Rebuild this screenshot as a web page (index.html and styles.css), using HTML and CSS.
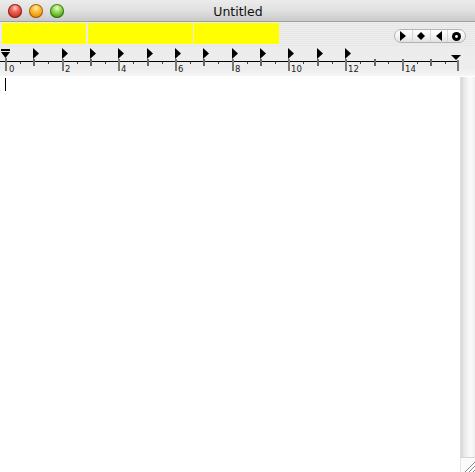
FILE: index.html
```html
<!DOCTYPE html>
<html>
<head>
<meta charset="utf-8">
<title>Untitled</title>
<link rel="stylesheet" href="styles.css">
</head>
<body>
<div class="window">
  <div class="titlebar">
    <div class="lights">
      <span class="light red"></span>
      <span class="light orange"></span>
      <span class="light green"></span>
    </div>
    <div class="title">Untitled</div>
  </div>
  <div class="toolbar">
    <div class="blocks">
      <div class="block b1"></div>
      <div class="block b2"></div>
      <div class="block b3"></div>
    </div>
    <div class="seg">
      <div class="seg-item"><svg width="6" height="10" viewBox="0 0 6 10"><polygon points="0,0 6,5 0,10" fill="#000"/></svg></div>
      <div class="seg-item"><svg width="8" height="8" viewBox="0 0 8 8"><polygon points="4,0 8,4 4,8 0,4" fill="#000"/></svg></div>
      <div class="seg-item"><svg width="6" height="10" viewBox="0 0 6 10"><polygon points="6,0 0,5 6,10" fill="#000"/></svg></div>
      <div class="seg-item"><svg width="9" height="9" viewBox="0 0 9 9"><circle cx="4.5" cy="4.5" r="4.5" fill="#000"/><circle cx="4.5" cy="4.5" r="1.4" fill="#fff"/></svg></div>
    </div>
  </div>
  <div class="ruler">
    <svg class="ruler-svg" width="475" height="30" viewBox="0 46 475 30">
      <rect x="0" y="61" width="458" height="1" fill="#000"/>
      <g fill="#444">
        <rect x="20" y="62" width="1" height="2"/>
        <rect x="48" y="62" width="1" height="2"/>
        <rect x="77" y="62" width="1" height="2"/>
        <rect x="105" y="62" width="1" height="2"/>
        <rect x="133" y="62" width="1" height="2"/>
        <rect x="162" y="62" width="1" height="2"/>
        <rect x="190" y="62" width="1" height="2"/>
        <rect x="218" y="62" width="1" height="2"/>
        <rect x="247" y="62" width="1" height="2"/>
        <rect x="275" y="62" width="1" height="2"/>
        <rect x="303" y="62" width="1" height="2"/>
        <rect x="332" y="62" width="1" height="2"/>
        <rect x="360" y="62" width="1" height="2"/>
        <rect x="388" y="62" width="1" height="2"/>
        <rect x="417" y="62" width="1" height="2"/>
        <rect x="445" y="62" width="1" height="2"/>
      </g>
      <g fill="#666">
        <rect x="33" y="59" width="2" height="7"/>
        <rect x="90" y="59" width="2" height="7"/>
        <rect x="147" y="59" width="2" height="7"/>
        <rect x="203" y="59" width="2" height="7"/>
        <rect x="260" y="59" width="2" height="7"/>
        <rect x="317" y="59" width="2" height="7"/>
        <rect x="374" y="59" width="2" height="7"/>
        <rect x="430" y="59" width="2" height="7"/>
      </g>
      <g fill="#777">
        <rect x="5" y="58" width="2" height="13"/>
        <rect x="62" y="59" width="2" height="12"/>
        <rect x="118" y="59" width="2" height="12"/>
        <rect x="175" y="59" width="2" height="12"/>
        <rect x="232" y="59" width="2" height="12"/>
        <rect x="288" y="59" width="2" height="12"/>
        <rect x="345" y="59" width="2" height="12"/>
        <rect x="402" y="59" width="2" height="12"/>
        <rect x="457" y="60" width="2" height="11"/>
      </g>
      <g class="ruler-num">
        <text x="9" y="72">0</text>
        <text x="65" y="72">2</text>
        <text x="121" y="72">4</text>
        <text x="178" y="72">6</text>
        <text x="235" y="72">8</text>
        <text x="291" y="72">10</text>
        <text x="348" y="72">12</text>
        <text x="405" y="72">14</text>
      </g>
      <g fill="#000">
        <polygon points="33,48 39,53.5 33,59"/>
        <polygon points="62,48 68,53.5 62,59"/>
        <polygon points="90,48 96,53.5 90,59"/>
        <polygon points="118,48 124,53.5 118,59"/>
        <polygon points="147,48 153,53.5 147,59"/>
        <polygon points="175,48 181,53.5 175,59"/>
        <polygon points="203,48 209,53.5 203,59"/>
        <polygon points="232,48 238,53.5 232,59"/>
        <polygon points="260,48 266,53.5 260,59"/>
        <polygon points="288,48 294,53.5 288,59"/>
        <polygon points="317,48 323,53.5 317,59"/>
        <polygon points="345,48 351,53.5 345,59"/>
      </g>
      <rect x="1" y="49" width="9" height="2" fill="#000"/>
      <polygon points="1,52 10,52 5.5,58" fill="#000"/>
      <polygon points="451,55 461,55 456,60" fill="#000"/>
    </svg>
  </div>
  <div class="content">
    <div class="text-area">
      <span class="caret"></span>
    </div>
    <div class="scroll">
      <div class="track"></div>
      <div class="grow">
        <svg width="15" height="15" viewBox="0 0 15 15">
          <g stroke="#8a8a8a" stroke-width="1">
            <line x1="4" y1="14" x2="14" y2="4"/>
            <line x1="8" y1="14" x2="14" y2="8"/>
            <line x1="12" y1="14" x2="14" y2="12"/>
          </g>
          <g stroke="#fff" stroke-width="1">
            <line x1="5" y1="14" x2="14" y2="5"/>
            <line x1="9" y1="14" x2="14" y2="9"/>
          </g>
        </svg>
      </div>
    </div>
  </div>
</div>
</body>
</html>
```

FILE: styles.css
```css
* { box-sizing: border-box; }

html, body {
  margin: 0;
  padding: 0;
  background: #fff;
}

.window {
  width: 475px;
  height: 472px;
  display: flex;
  flex-direction: column;
  font-family: "DejaVu Sans", "Liberation Sans", sans-serif;
  overflow: hidden;
}

.titlebar {
  height: 22px;
  flex: none;
  display: flex;
  align-items: center;
  background: linear-gradient(to bottom, #ececec 0%, #e0e0e0 50%, #cacaca 100%);
  border-bottom: 1px solid #a0a0a0;
}

.lights {
  display: flex;
  gap: 7px;
  padding-left: 8px;
  padding-top: 1px;
}

.light {
  width: 14px;
  height: 14px;
  border-radius: 50%;
  display: block;
}

.light.red {
  background: radial-gradient(circle at 50% 30%, #ffd0c8 0%, #f06a5c 30%, #d43a2e 65%, #8c1a12 100%);
  box-shadow: inset 0 0 0 1px rgba(100, 10, 5, 0.6);
}

.light.orange {
  background: radial-gradient(circle at 50% 30%, #fff0c0 0%, #ffc040 30%, #f09a10 65%, #a05a00 100%);
  box-shadow: inset 0 0 0 1px rgba(110, 60, 0, 0.6);
}

.light.green {
  background: radial-gradient(circle at 50% 30%, #e6ffd0 0%, #9ee060 30%, #5cb026 65%, #2c6a0c 100%);
  box-shadow: inset 0 0 0 1px rgba(30, 80, 5, 0.6);
}

.title {
  flex: 1;
  text-align: center;
  font-size: 12.5px;
  color: #111;
  margin-left: -63px;
  padding-top: 1px;
}

.toolbar {
  height: 24px;
  flex: none;
  display: flex;
  align-items: flex-start;
  justify-content: space-between;
  padding: 1px 9px 0 2px;
  background: repeating-linear-gradient(to bottom, #ededed 0, #ededed 1px, #e7e7e7 1px, #e7e7e7 2px);
}

.blocks {
  display: flex;
  height: 21px;
}

.block {
  background: #ffff00;
  height: 21px;
}

.b1 { width: 84px; margin-right: 2px; }
.b2 { width: 105px; margin-right: 1px; }
.b3 { width: 85px; }

.seg {
  margin-top: 6px;
  width: 72px;
  height: 14px;
  display: flex;
  border: 1px solid #b4b4b4;
  border-radius: 7px;
  background: linear-gradient(to bottom, #ffffff 0%, #f4f4f4 50%, #e2e2e2 100%);
  overflow: hidden;
}

.seg-item {
  flex: 1;
  display: flex;
  align-items: center;
  justify-content: center;
  border-right: 1px solid #d6d6d6;
}

.seg-item:last-child {
  border-right: none;
}

.seg-item svg {
  display: block;
}

.ruler {
  height: 30px;
  flex: none;
  background: linear-gradient(to bottom, #ececec 0%, #ededed 75%, #f6f6f6 100%);
}

.ruler-svg {
  display: block;
}

.ruler-num text {
  font-family: "DejaVu Sans", "Liberation Sans", sans-serif;
  font-size: 8.5px;
  fill: #222;
}

.content {
  flex: 1;
  display: flex;
  min-height: 0;
}

.text-area {
  flex: 1;
  background: #fff;
  padding: 2px 0 0 5px;
}

.caret {
  display: block;
  width: 1px;
  height: 13px;
  background: #000;
}

.scroll {
  width: 15px;
  flex: none;
  display: flex;
  flex-direction: column;
  padding-top: 1px;
}

.track {
  flex: 1;
  background: linear-gradient(to right, #d6d6d6 0%, #e9e9e9 25%, #f7f7f7 55%, #fafafa 75%, #eeeeee 100%);
  border-left: 1px solid #e0e0e0;
}

.grow {
  height: 15px;
  flex: none;
  background: #fbfbfb;
  border-top: 1px solid #d4d4d4;
  border-left: 1px solid #e4e4e4;
}

.grow svg {
  display: block;
}
```
